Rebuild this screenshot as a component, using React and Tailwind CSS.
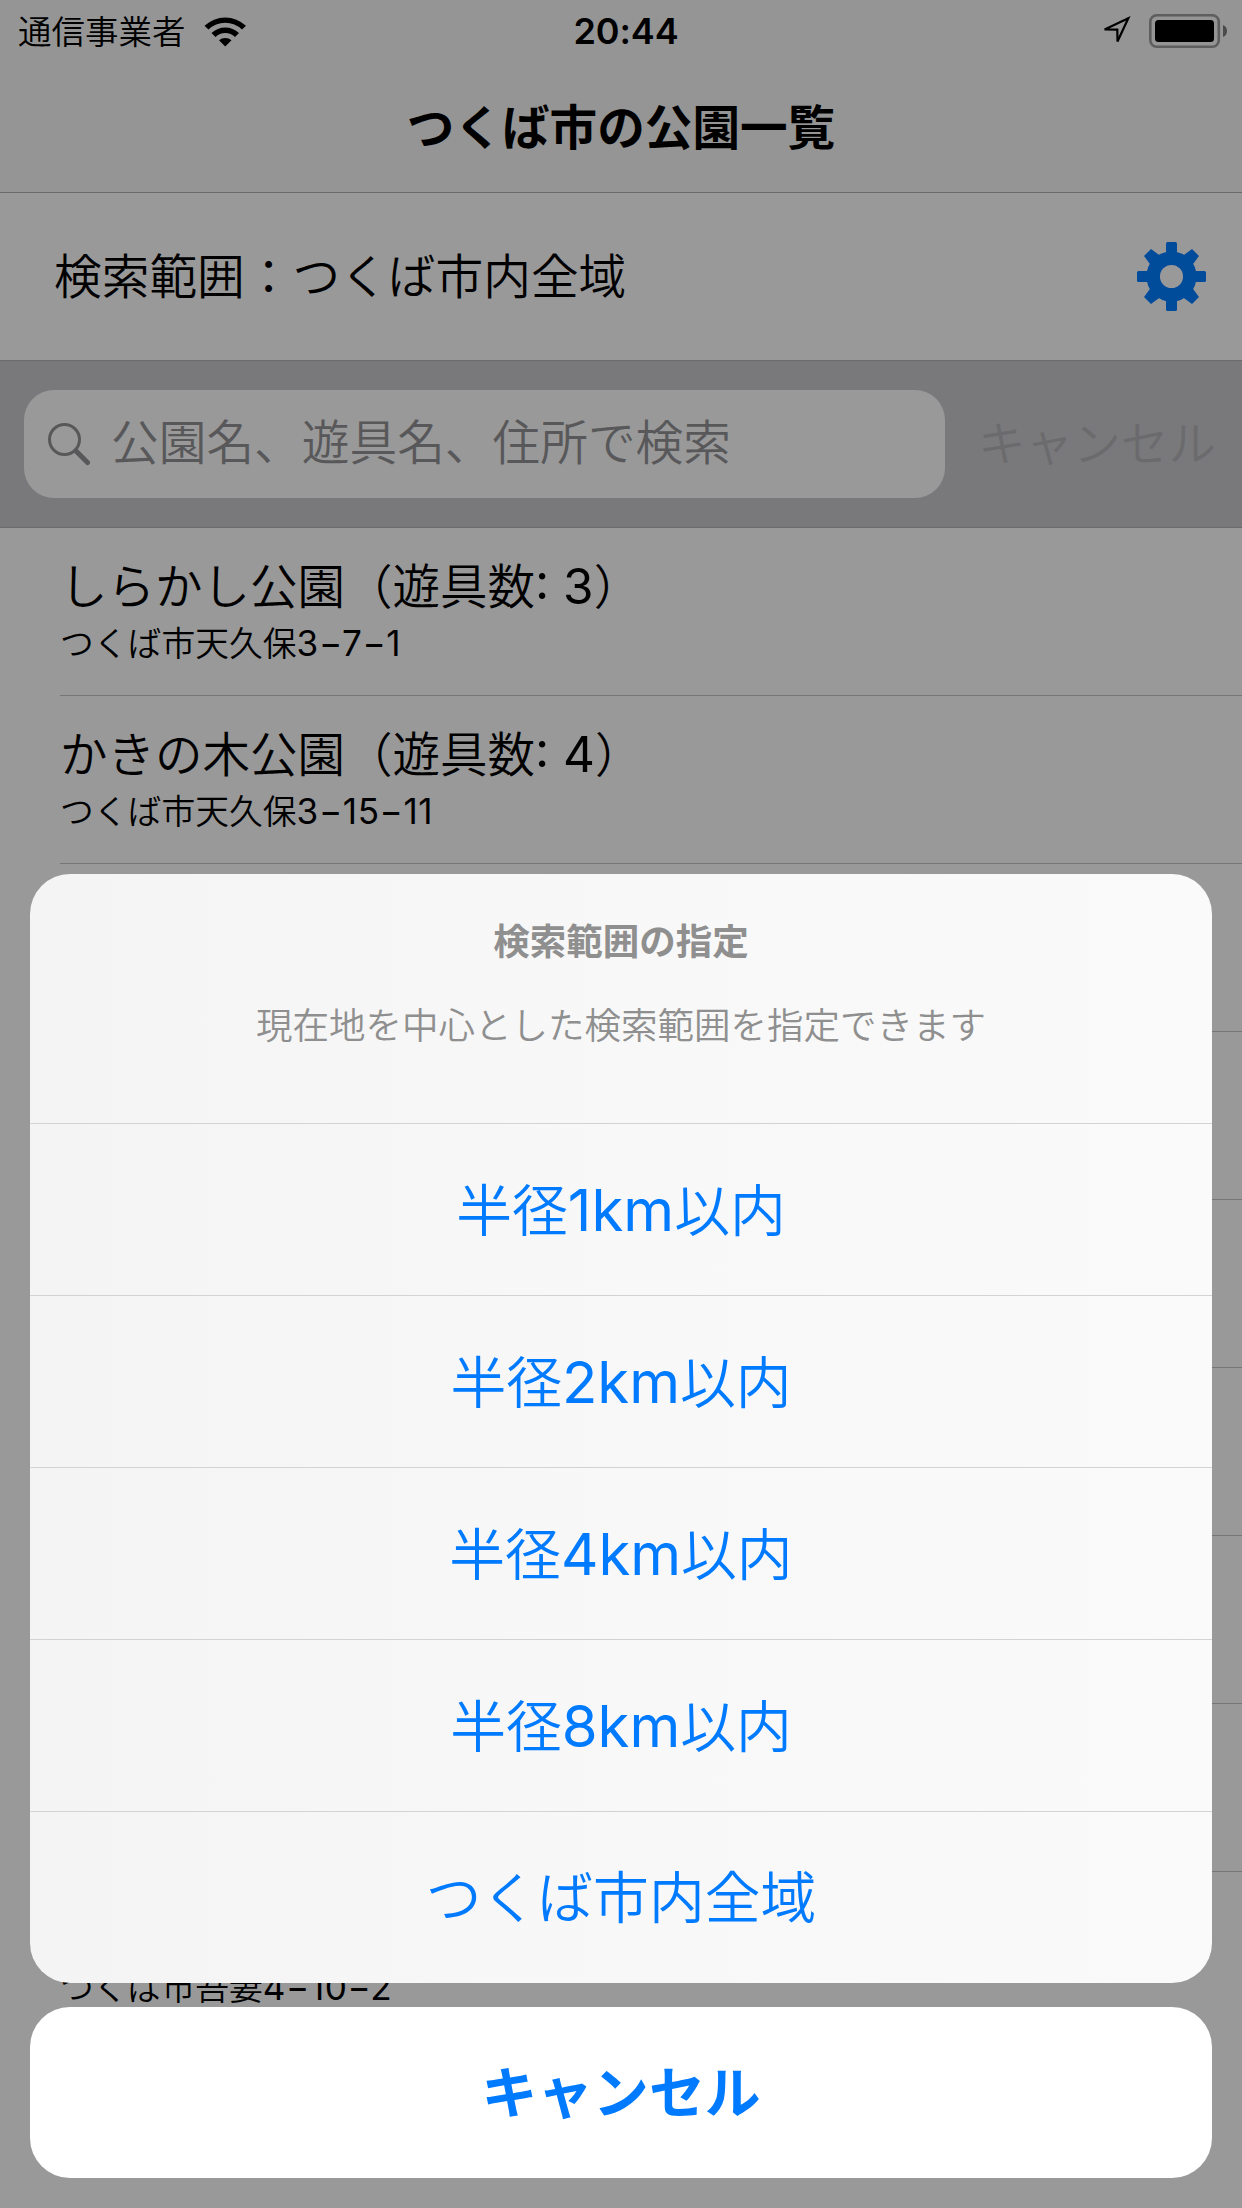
const SANS = "font-['Inter','Noto_Sans_CJK_JP',sans-serif]";

const parks = [
  ["しらかし公園（遊具数: 3）", "つくば市天久保3−7−1"],
  ["かきの木公園（遊具数: 4）", "つくば市天久保3−15−11"],
  null, null, null, null, null, null,
  ["", "つくば市吾妻4−10−2"],
];

const options = ["半径1km以内", "半径2km以内", "半径4km以内", "半径8km以内", "つくば市内全域"];

// Latin runs are set a little larger and heavier than the Japanese around them.
function Mixed({ text, className = "" }) {
  return text.split(/([ -~−]+)/).map((run, i) =>
    i % 2 ? (
      <span key={i} className={`text-[1.04em] leading-none font-normal whitespace-pre ${className}`}>{run}</span>
    ) : (
      run
    )
  );
}

function Wifi() {
  return (
    <svg className="ml-[18px] h-[31px] w-[43px]" viewBox="0 0 43 31">
      <path d="M0.5 9.8A30 30 0 0 1 42 9.8L38 13.6A24 24 0 0 0 4.5 13.6Z" />
      <path d="M7.5 17A20 20 0 0 1 35 17L31 21A14 14 0 0 0 11.5 21Z" />
      <path d="M15 24.3A9.5 9.5 0 0 1 27.5 24.3L21.25 30.5Z" />
    </svg>
  );
}

function Gear() {
  return (
    <svg className="size-[69px]" viewBox="-34.5 -34.5 69 69" fill="#004c9b">
      {[0, 90, 180, 270].map((a) => (
        <g key={a} transform={`rotate(${a})`}>
          <rect x="-5.5" y="-34.5" width="11" height="13" rx="1.5" />
          <path d="M11 -20.5L20.5 -27.5L27.5 -20.5L20.5 -11L11 -11Z" />
        </g>
      ))}
      <circle r="18.3" fill="none" stroke="#004c9b" strokeWidth="13.5" />
    </svg>
  );
}

export default function App() {
  return (
    <div lang="ja" className={`relative h-[2208px] w-[1242px] overflow-hidden bg-[#999999] text-black ${SANS}`}>
      <header className="h-[193px] border-b border-[#6b6b6b] bg-[#959595]">
        <div className="grid h-[62px] grid-cols-3 items-center">
          <div className="flex items-center pl-[18px]">
            <span className="pt-[3px] text-[33.5px] leading-none font-[350]">通信事業者</span>
            <Wifi />
          </div>
          <div className="pl-[10px] text-center text-[36px] leading-none font-semibold tracking-[-0.1px]">20:44</div>
          <div className="flex items-center justify-end">
            <svg className="mr-[18px] h-[30px] w-[30px]" viewBox="0 0 30 30" fill="none" stroke="#000" strokeWidth="2.2">
              <path d="M27.3 2.3L3.6 13.5L16.3 13.6L16.5 25.5Z" />
            </svg>
            <svg className="mr-[15px] h-[34px] w-[78px]" viewBox="0 0 78 34">
              <rect x="1.3" y="1.3" width="68.5" height="31.4" rx="6.5" fill="none" stroke="#5e5e5e" strokeWidth="2.6" />
              <rect x="6" y="6" width="59" height="22" rx="3.5" />
              <path d="M74 11Q78 12.5 78 17Q78 21.5 74 23Z" fill="#4b4b4b" />
            </svg>
          </div>
        </div>
        <h1 className="pt-[42px] text-center text-[47.6px] leading-[48px] font-bold">つくば市の公園一覧</h1>
      </header>
      <div className="flex h-[167px] items-center justify-between pr-[36px] pl-[54px]">
        <span className="pt-[3px] text-[47.7px] leading-none font-[350]">検索範囲：つくば市内全域</span>
        <Gear />
      </div>
      <div className="flex h-[168px] items-center border-y border-[#6b6b6d] bg-[#79797b] pl-6">
        <div className="flex h-[108px] w-[921px] items-center rounded-[30px] bg-[#999999] pl-6 text-[#58585a]">
          <svg className="h-[43px] w-[43px]" viewBox="0 0 43 43" fill="none" stroke="currentColor">
            <circle cx="16.5" cy="16.5" r="15" strokeWidth="3" />
            <path d="M28 28L39.5 39.5" strokeWidth="5" strokeLinecap="round" />
          </svg>
          <span className="ml-[20px] text-[47.7px] leading-none font-[350]">公園名、遊具名、住所で検索</span>
        </div>
        <span className="ml-[33px] text-[47.6px] leading-none font-[350] text-[#6b6b6d]">キャンセル</span>
      </div>
      <ul>
        {parks.map((park, i) => (
          <li key={i} className="ml-[60px] h-[168px] border-[#767677] pt-[29px] not-last:border-b">
            {park && (
              <>
                <div className="h-[61px] text-[47.5px] leading-[60px] font-[350] whitespace-nowrap"><Mixed text={park[0]} /></div>
                <div className="h-[50px] text-[33.8px] leading-[51px] font-[350] whitespace-nowrap"><Mixed text={park[1]} className="tracking-[0.6px]" /></div>
              </>
            )}
          </li>
        ))}
      </ul>

      <div className="absolute inset-x-[30px] bottom-[30px] flex flex-col gap-6 text-center">
        <section className="overflow-hidden rounded-[40px] bg-linear-to-r from-[#f4f4f4] via-[#f8f8f8] to-[#fafafa]">
          <div className="flex h-[249px] flex-col items-center pt-[44px] text-[#8f8f8f]">
            <h2 className="text-[36.5px] leading-[48px] font-bold">検索範囲の指定</h2>
            <p className="mt-9 text-[36.5px] leading-[48px] font-[350]">現在地を中心とした検索範囲を指定できます</p>
          </div>
          {options.map((label) => (
            <button key={label} className="h-[172px] w-full border-t border-[#d3d3d4] pt-px text-[55.8px] leading-none font-[350] text-[#007aff]">
              <Mixed text={label} />
            </button>
          ))}
        </section>
        <button className="flex h-[171px] items-center justify-center rounded-[40px] bg-white pt-px text-[55.8px] leading-none font-bold text-[#007aff]">キャンセル</button>
      </div>
    </div>
  );
}
